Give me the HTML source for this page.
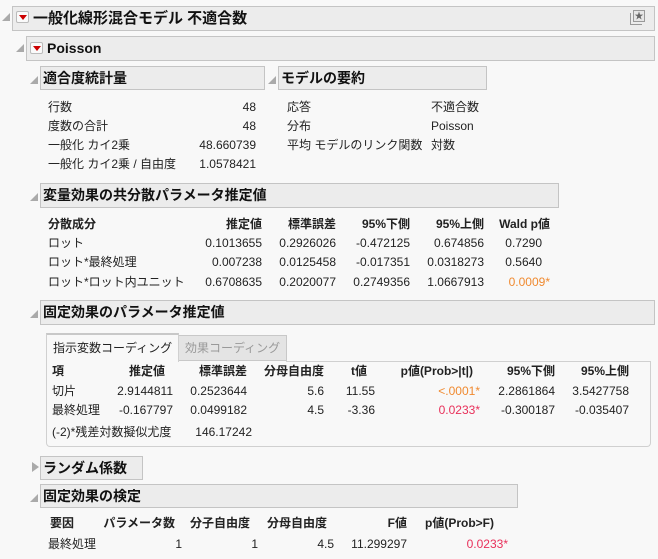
<!DOCTYPE html>
<html><head><meta charset="utf-8"><style>
*{margin:0;padding:0;box-sizing:border-box}
body{width:658px;height:559px;background:#f8f8f8;font-family:"Liberation Sans","Noto Sans CJK JP",sans-serif;font-size:12px;color:#222;position:relative;overflow:hidden}
.h{position:absolute;background:#ececec;border:1px solid #c4c4c4;font-weight:bold;font-size:14px;line-height:22px;padding-left:2px;color:#111;white-space:nowrap}
.t{position:absolute;line-height:16px;white-space:nowrap}
.r{position:absolute;line-height:16px;white-space:nowrap;text-align:right}
.b{font-weight:bold}
.tri{position:absolute;width:0;height:0;border-left:8px solid transparent;border-bottom:8px solid #aaa}
.tr2{position:absolute;width:0;height:0;border-top:5px solid transparent;border-bottom:5px solid transparent;border-left:7px solid #aaa}
.red{position:absolute;width:13px;height:12px;border:1px solid #bbb;background:#fafafa;border-radius:2px}
.red:after{content:"";position:absolute;left:2px;top:3px;border-left:4px solid transparent;border-right:4px solid transparent;border-top:5px solid #c00}
.o{color:#f08a30}.p{color:#e8305a}
.tab{position:absolute;font-size:12px;white-space:nowrap;padding-left:6px}
</style></head><body>
<div class="tri" style="left:2px;top:13px"></div>
<div class="h" style="left:12px;top:6px;width:643px;height:25px;font-size:15px;padding-left:20px;line-height:23px">一般化線形混合モデル 不適合数</div>
<div class="red" style="left:16px;top:11px"></div>
<div style="position:absolute;left:633px;top:10px;width:12px;height:12px;border:1px solid #999;background:#e6e6e6;font-size:9px;line-height:10px;text-align:center;color:#666">★</div>
<div style="position:absolute;left:630px;top:13px;width:12px;height:12px;border-left:1px solid #999;border-bottom:1px solid #999"></div>

<div class="tri" style="left:16px;top:44px"></div>
<div class="h" style="left:26px;top:36px;width:629px;height:25px;padding-left:20px">Poisson</div>
<div class="red" style="left:30px;top:42px"></div>

<div class="tri" style="left:30px;top:76px"></div>
<div class="h" style="left:40px;top:66px;width:225px;height:24px">適合度統計量</div>
<div class="tri" style="left:268px;top:76px"></div>
<div class="h" style="left:278px;top:66px;width:209px;height:24px">モデルの要約</div>
<div class="t" style="left:48px;top:99px">行数</div><div class="r" style="right:402px;top:99px">48</div>
<div class="t" style="left:48px;top:118px">度数の合計</div><div class="r" style="right:402px;top:118px">48</div>
<div class="t" style="left:48px;top:137px">一般化 カイ2乗</div><div class="r" style="right:402px;top:137px">48.660739</div>
<div class="t" style="left:48px;top:156px">一般化 カイ2乗 / 自由度</div><div class="r" style="right:402px;top:156px">1.0578421</div>
<div class="t" style="left:287px;top:99px">応答</div><div class="t" style="left:431px;top:99px">不適合数</div>
<div class="t" style="left:287px;top:118px">分布</div><div class="t" style="left:431px;top:118px">Poisson</div>
<div class="t" style="left:287px;top:137px">平均 モデルのリンク関数</div><div class="t" style="left:431px;top:137px">対数</div>

<div class="tri" style="left:30px;top:193px"></div>
<div class="h" style="left:40px;top:183px;width:519px;height:25px">変量効果の共分散パラメータ推定値</div>
<div class="t b" style="left:48px;top:216px">分散成分</div>
<div class="r b" style="right:396px;top:216px">推定値</div>
<div class="r b" style="right:322px;top:216px">標準誤差</div>
<div class="r b" style="right:248px;top:216px">95%下側</div>
<div class="r b" style="right:174px;top:216px">95%上側</div>
<div class="r b" style="right:108px;top:216px">Wald p値</div>
<div class="t" style="left:48px;top:235px">ロット</div>
<div class="r" style="right:396px;top:235px">0.1013655</div><div class="r" style="right:322px;top:235px">0.2926026</div><div class="r" style="right:248px;top:235px">-0.472125</div><div class="r" style="right:174px;top:235px">0.674856</div><div class="r" style="right:116px;top:235px">0.7290</div>
<div class="t" style="left:48px;top:254px">ロット*最終処理</div>
<div class="r" style="right:396px;top:254px">0.007238</div><div class="r" style="right:322px;top:254px">0.0125458</div><div class="r" style="right:248px;top:254px">-0.017351</div><div class="r" style="right:174px;top:254px">0.0318273</div><div class="r" style="right:116px;top:254px">0.5640</div>
<div class="t" style="left:48px;top:274px">ロット*ロット内ユニット</div>
<div class="r" style="right:396px;top:274px">0.6708635</div><div class="r" style="right:322px;top:274px">0.2020077</div><div class="r" style="right:248px;top:274px">0.2749356</div><div class="r" style="right:174px;top:274px">1.0667913</div><div class="r o" style="right:108px;top:274px">0.0009*</div>

<div class="tri" style="left:30px;top:310px"></div>
<div class="h" style="left:40px;top:300px;width:615px;height:25px">固定効果のパラメータ推定値</div>
<div style="position:absolute;left:46px;top:361px;width:605px;height:86px;border:1px solid #d0d0d0;border-top:none;border-radius:0 0 4px 4px;background:#f8f8f8"></div>
<div class="tab" style="left:178px;top:335px;width:109px;height:26px;border:1px solid #c8c8c8;background:#e4e4e4;color:#999;line-height:25px">効果コーディング</div>
<div class="tab" style="left:46px;top:333px;width:133px;height:29px;border:1px solid #d0d0d0;border-bottom:none;border-top:2px solid #c8c8c8;background:#f8f8f8;line-height:26px">指示変数コーディング</div>
<div style="position:absolute;left:286px;top:361px;width:365px;height:1px;background:#d0d0d0"></div>
<div class="t b" style="left:52px;top:363px">項</div>
<div class="r b" style="right:493px;top:363px">推定値</div>
<div class="r b" style="right:411px;top:363px">標準誤差</div>
<div class="r b" style="right:334px;top:363px">分母自由度</div>
<div class="r b" style="right:291px;top:363px">t値</div>
<div class="r b" style="right:185px;top:363px">p値(Prob&gt;|t|)</div>
<div class="r b" style="right:103px;top:363px">95%下側</div>
<div class="r b" style="right:29px;top:363px">95%上側</div>
<div class="t" style="left:52px;top:383px">切片</div>
<div class="r" style="right:485px;top:383px">2.9144811</div><div class="r" style="right:411px;top:383px">0.2523644</div><div class="r" style="right:334px;top:383px">5.6</div><div class="r" style="right:283px;top:383px">11.55</div><div class="r o" style="right:178px;top:383px">&lt;.0001*</div><div class="r" style="right:103px;top:383px">2.2861864</div><div class="r" style="right:29px;top:383px">3.5427758</div>
<div class="t" style="left:52px;top:402px">最終処理</div>
<div class="r" style="right:485px;top:402px">-0.167797</div><div class="r" style="right:411px;top:402px">0.0499182</div><div class="r" style="right:334px;top:402px">4.5</div><div class="r" style="right:283px;top:402px">-3.36</div><div class="r p" style="right:178px;top:402px">0.0233*</div><div class="r" style="right:103px;top:402px">-0.300187</div><div class="r" style="right:29px;top:402px">-0.035407</div>
<div class="t" style="left:52px;top:424px">(-2)*残差対数擬似尤度</div><div class="r" style="right:406px;top:424px">146.17242</div>

<div class="tr2" style="left:32px;top:462px"></div>
<div class="h" style="left:40px;top:456px;width:103px;height:24px">ランダム係数</div>
<div class="tri" style="left:30px;top:494px"></div>
<div class="h" style="left:40px;top:484px;width:478px;height:24px">固定効果の検定</div>
<div class="t b" style="left:50px;top:515px">要因</div>
<div class="r b" style="right:483px;top:515px">パラメータ数</div>
<div class="r b" style="right:408px;top:515px">分子自由度</div>
<div class="r b" style="right:331px;top:515px">分母自由度</div>
<div class="r b" style="right:251px;top:515px">F値</div>
<div class="r b" style="right:164px;top:515px">p値(Prob&gt;F)</div>
<div class="t" style="left:48px;top:536px">最終処理</div>
<div class="r" style="right:476px;top:536px">1</div><div class="r" style="right:400px;top:536px">1</div><div class="r" style="right:324px;top:536px">4.5</div><div class="r" style="right:251px;top:536px">11.299297</div><div class="r p" style="right:150px;top:536px">0.0233*</div>
</body></html>
